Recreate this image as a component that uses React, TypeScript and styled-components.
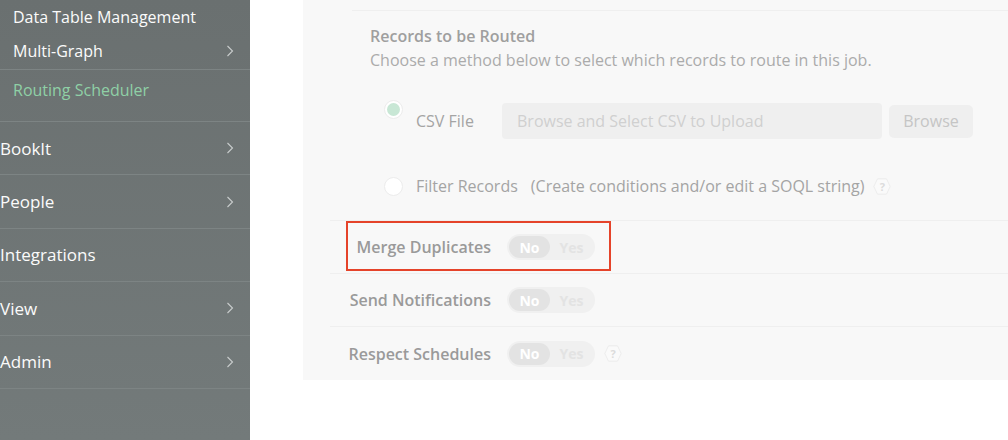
import React from "react";
import styled, { createGlobalStyle } from "styled-components";

const Global = createGlobalStyle`
  html, body { margin: 0; padding: 0; background: #fff; }
  body { font-family: "Open Sans", "Liberation Sans", sans-serif; }
  * { box-sizing: border-box; }
`;

const Page = styled.div`
  display: flex;
  width: 1008px;
  height: 440px;
  overflow: hidden;
`;

const Sidebar = styled.nav`
  width: 250px;
  flex: none;
  height: 100%;
  background: linear-gradient(180deg, #6a7070 0%, #737a7a 100%);
  color: #fbfbfb;
`;

const SubMenu = styled.div`
  padding-bottom: 12px;
  border-bottom: 1px solid #7d8484;
`;

const SubItem = styled.div<{ $active?: boolean; $divider?: boolean; $h?: number }>`
  height: ${(p) => p.$h ?? 36}px;
  display: flex;
  align-items: center;
  justify-content: space-between;
  padding: 0 16px 0 13px;
  font-size: 16px;
  color: ${(p) => (p.$active ? "#8fd0a6" : "#fbfbfb")};
  border-bottom: ${(p) => (p.$divider ? "1px solid #7d8484" : "none")};
`;

const NavItem = styled.div`
  height: 53.4px;
  display: flex;
  align-items: center;
  justify-content: space-between;
  padding: 0 16px 0 0;
  font-size: 17px;
  border-bottom: 1px solid #7d8484;
`;

const Chevron = () => (
  <svg width="8" height="12" viewBox="0 0 8 12" aria-hidden>
    <polyline points="1.5,1 6.5,6 1.5,11" fill="none" stroke="#c9cdcd" strokeWidth="1.1" />
  </svg>
);

const Main = styled.main`
  flex: 1;
  padding-left: 53px;
  background: #fff;
`;

const Panel = styled.section`
  height: 380px;
  background: #f8f8f8;
  display: flex;
  flex-direction: column;
`;

const TopRule = styled.div`
  height: 11px;
  margin-left: 49px;
  border-bottom: 1px solid #efefef;
`;

const Records = styled.div`
  padding: 13px 0 22px 40px;
  border-bottom: 1px solid #efefef;
  margin-left: 27px;
`;

const Title = styled.div`
  font-size: 16px;
  font-weight: 600;
  line-height: 24px;
  color: #9f9f9f;
`;

const Desc = styled.div`
  font-size: 16px;
  line-height: 24px;
  color: #ababab;
`;

const Option = styled.div<{ $first?: boolean }>`
  display: flex;
  align-items: ${(p) => (p.$first ? "flex-start" : "center")};
  margin-top: ${(p) => (p.$first ? "28px" : "35px")};
  padding-left: 14px;
`;

const Radio = styled.span<{ $checked?: boolean }>`
  width: 19px;
  height: 19px;
  flex: none;
  border-radius: 50%;
  background: #fff;
  border: 1px solid #ececec;
  display: flex;
  align-items: center;
  justify-content: center;
  &::after {
    content: "";
    width: 13px;
    height: 13px;
    border-radius: 50%;
    background: ${(p) => (p.$checked ? "#c8e7d5" : "transparent")};
  }
`;

const FieldGroup = styled.div`
  display: flex;
  align-items: center;
  margin-top: 3px;
  margin-left: 13px;
`;

const OptionLabel = styled.span<{ $width?: number }>`
  font-size: 16px;
  color: #a4a4a4;
  line-height: 24px;
  width: ${(p) => (p.$width ? `${p.$width}px` : "auto")};
  flex: none;
`;

const PlainLabel = styled(OptionLabel)`
  margin-left: 13px;
`;

const Hint = styled.span`
  font-size: 16px;
  color: #a4a4a4;
  margin-left: 13px;
`;

const FileInput = styled.div`
  width: 380px;
  height: 36px;
  border-radius: 4px;
  background: #efefef;
  color: #d0d0d0;
  font-size: 16px;
  display: flex;
  align-items: center;
  padding-left: 15px;
`;

const BrowseButton = styled.div`
  width: 84px;
  height: 33px;
  margin-left: 7px;
  border-radius: 5px;
  background: #efefef;
  color: #c5c5c5;
  font-size: 16px;
  display: flex;
  align-items: center;
  justify-content: center;
`;

const SettingRow = styled.div<{ $last?: boolean; $highlight?: boolean }>`
  position: relative;
  height: 53px;
  margin-left: 27px;
  display: flex;
  align-items: center;
  border-bottom: ${(p) => (p.$last ? "none" : "1px solid #efefef")};
  ${(p) =>
    p.$highlight
      ? `&::before {
    content: "";
    position: absolute;
    left: 16px;
    top: 0px;
    width: 261px;
    height: 46px;
    border: 2px solid #e5432a;
    pointer-events: none;
  }`
      : ""}
`;

const SettingLabel = styled.span`
  width: 161px;
  flex: none;
  text-align: right;
  font-size: 16px;
  font-weight: 600;
  color: #9a9a9a;
`;

const Toggle = styled.div`
  margin-left: 16px;
  width: 88px;
  height: 26px;
  border-radius: 13px;
  background: #f0f0f0;
  display: flex;
  align-items: center;
  padding: 0 2px;
`;

const ToggleOption = styled.span<{ $on?: boolean }>`
  width: 41px;
  height: 22px;
  border-radius: 11px;
  display: flex;
  align-items: center;
  justify-content: center;
  font-size: 14px;
  font-weight: 700;
  background: ${(p) => (p.$on ? "#e3e3e3" : "transparent")};
  color: ${(p) => (p.$on ? "#ffffff" : "#e3e3e3")};
  flex: ${(p) => (p.$on ? "none" : "1")};
`;

const HelpWrap = styled.span`
  display: inline-flex;
  position: relative;
  width: 18px;
  height: 17px;
  margin-left: 9px;
  align-items: center;
  justify-content: center;
  font-size: 11px;
  font-weight: 700;
  color: #dcdcdc;
  svg { position: absolute; inset: 0; }
  span { position: relative; }
`;

const Help = () => (
  <HelpWrap>
    <svg width="18" height="17" viewBox="0 0 18 17" aria-hidden>
      <polygon points="4.5,0.8 13.5,0.8 17.2,8.5 13.5,16.2 4.5,16.2 0.8,8.5" fill="#fafafa" stroke="#ececec" strokeWidth="1" />
    </svg>
    <span>?</span>
  </HelpWrap>
);

const ToggleSwitch = () => (
  <Toggle>
    <ToggleOption $on>No</ToggleOption>
    <ToggleOption>Yes</ToggleOption>
  </Toggle>
);

export default function App() {
  return (
    <Page>
      <Global />
      <Sidebar>
        <SubMenu>
          <SubItem $h={33}>Data Table Management</SubItem>
          <SubItem $h={37} $divider>
            Multi-Graph
            <Chevron />
          </SubItem>
          <SubItem $h={39} $active>Routing Scheduler</SubItem>
        </SubMenu>
        <NavItem>
          BookIt
          <Chevron />
        </NavItem>
        <NavItem>
          People
          <Chevron />
        </NavItem>
        <NavItem>Integrations</NavItem>
        <NavItem>
          View
          <Chevron />
        </NavItem>
        <NavItem>
          Admin
          <Chevron />
        </NavItem>
      </Sidebar>
      <Main>
        <Panel>
          <TopRule />
          <Records>
            <Title>Records to be Routed</Title>
            <Desc>Choose a method below to select which records to route in this job.</Desc>
            <Option $first>
              <Radio $checked />
              <FieldGroup>
                <OptionLabel $width={86}>CSV File</OptionLabel>
                <FileInput>Browse and Select CSV to Upload</FileInput>
                <BrowseButton>Browse</BrowseButton>
              </FieldGroup>
            </Option>
            <Option>
              <Radio />
              <PlainLabel>Filter Records</PlainLabel>
              <Hint>(Create conditions and/or edit a SOQL string)</Hint>
              <Help />
            </Option>
          </Records>
          <SettingRow $highlight>
            <SettingLabel>Merge Duplicates</SettingLabel>
            <ToggleSwitch />
          </SettingRow>
          <SettingRow>
            <SettingLabel>Send Notifications</SettingLabel>
            <ToggleSwitch />
          </SettingRow>
          <SettingRow $last>
            <SettingLabel>Respect Schedules</SettingLabel>
            <ToggleSwitch />
            <Help />
          </SettingRow>
        </Panel>
      </Main>
    </Page>
  );
}
